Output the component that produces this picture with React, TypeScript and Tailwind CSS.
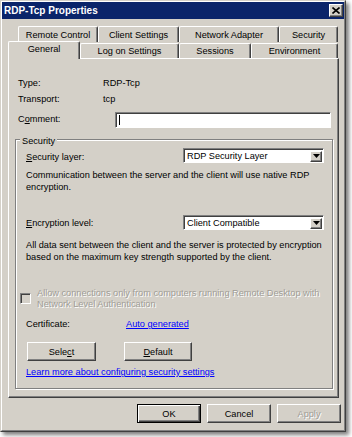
import React from "react";

const FONT = { fontFamily: '"Liberation Sans", Arial, sans-serif' };

function Tab({ label, w, h, selected }: { label: string; w: number; h: number; selected?: boolean }) {
  return (
    <div
      style={{ width: w, height: h }}
      className={
        "flex items-center justify-center border-t border-l border-r border-t-white border-l-white border-r-[#404040] rounded-t-[2px] bg-[#d4d0c8] shadow-[inset_-1px_0_#808080] text-[9.2px] leading-[12px] text-black " +
        (selected ? "relative z-10 translate-y-[1px] pb-[3px]" : "")
      }
    >
      {label}
    </div>
  );
}

function Select({ value }: { value: string }) {
  return (
    <div className="flex h-[15px] w-[141px] items-center border border-t-[#808080] border-l-[#808080] border-b-white border-r-white bg-white shadow-[inset_1px_1px_#404040]">
      <span className="flex-1 pl-[3px] pt-[1px] text-[9.2px] leading-[12px] text-black">{value}</span>
      <div className="mr-[1px] mt-[1px] flex h-[11px] w-[12px] items-center justify-center border border-t-white border-l-white border-b-[#404040] border-r-[#404040] bg-[#d4d0c8] shadow-[inset_-1px_-1px_#808080]">
        <svg width="7" height="4" viewBox="0 0 7 4">
          <path d="M0 0h7L3.5 4z" fill="#000" />
        </svg>
      </div>
    </div>
  );
}

function Button({ label, w, def, disabled }: { label: React.ReactNode; w: number; def?: boolean; disabled?: boolean }) {
  return (
    <div
      style={{ width: w }}
      className={
        "flex h-[19px] items-center justify-center bg-[#d4d0c8] text-[9.2px] leading-[12px] " +
        (def
          ? "border border-black shadow-[inset_1px_1px_#fff,inset_-1px_-1px_#404040,inset_-2px_-2px_#808080]"
          : "border border-t-white border-l-white border-b-[#404040] border-r-[#404040] shadow-[inset_-1px_-1px_#808080]") +
        (disabled ? " text-[#a09d96] [text-shadow:1px_1px_#fff]" : " text-black")
      }
    >
      {label}
    </div>
  );
}

export default function App() {
  return (
    <div className="h-[437px] w-[352px] bg-white" style={FONT}>
      <div className="h-[432px] w-[346px] border border-t-[#d4d0c8] border-l-[#d4d0c8] border-b-[#404040] border-r-[#404040] bg-[#d4d0c8] shadow-[3px_3px_4px_rgba(0,0,0,0.5)]">
        <div className="flex h-full flex-col border border-t-white border-l-white border-b-[#808080] border-r-[#808080]">
          {/* title bar */}
          <div className="flex h-[17px] items-center justify-between bg-[#0a246a] pl-[2px] pr-[1px]">
            <span className="text-[10px] font-bold leading-[12px] text-white">RDP-Tcp Properties</span>
            <div className="flex h-[13px] w-[14px] items-center justify-center border border-t-white border-l-white border-b-[#404040] border-r-[#404040] bg-[#d4d0c8] shadow-[inset_-1px_-1px_#808080]">
              <svg width="8" height="7" viewBox="0 0 8 7">
                <path d="M0.5 0.5L7.5 6.5M7.5 0.5L0.5 6.5" stroke="#000" strokeWidth="1.6" />
              </svg>
            </div>
          </div>

          {/* tabs */}
          <div className="mt-[7px] flex flex-col">
            <div className="flex pl-[16px]">
              <Tab label="Remote Control" w={80} h={16} />
              <Tab label="Client Settings" w={81} h={16} />
              <Tab label="Network Adapter" w={100} h={16} />
              <Tab label="Security" w={59} h={16} />
            </div>
            <div className="flex h-[16px] items-end pl-[6px]">
              <Tab label="General" w={72} h={18} selected />
              <Tab label="Log on Settings" w={99} h={15} />
              <Tab label="Sessions" w={72} h={15} />
              <Tab label="Environment" w={87} h={15} />
            </div>
          </div>

          {/* panel */}
          <div className="ml-[6px] flex h-[340px] w-[331px] flex-col border border-t-white border-l-white border-b-[#404040] border-r-[#404040] shadow-[inset_-1px_-1px_#808080] text-[9.2px] leading-[12px] text-black">
            <div className="mt-[18px] flex h-[12px] pl-[9px]">
              <span className="w-[85px]">Type:</span>
              <span>RDP-Tcp</span>
            </div>
            <div className="mt-[4px] flex h-[12px] pl-[9px]">
              <span className="w-[85px]">Transport:</span>
              <span>tcp</span>
            </div>
            <div className="mt-[7px] flex items-start pl-[9px]">
              <span className="mt-[1px] w-[97px]">
                C<span className="underline">o</span>mment:
              </span>
              <div className="flex h-[16px] w-[216px] items-center border border-t-[#808080] border-l-[#808080] border-b-white border-r-white bg-white shadow-[inset_1px_1px_#404040]">
                <div className="ml-[3px] h-[10px] w-[1px] bg-black" />
              </div>
            </div>

            {/* security group */}
            <div className="relative ml-[6px] mt-[11px] flex h-[250px] w-[318px] flex-col border border-[#808080] pr-[8px] pl-[10px] shadow-[inset_1px_1px_#fff,1px_1px_#fff]">
              <span className="absolute left-[4px] top-[-5px] bg-[#d4d0c8] px-[2px]">Security</span>

              <div className="mt-[8px] flex items-start justify-between">
                <span className="mt-[3px]">
                  <span className="underline">S</span>ecurity layer:
                </span>
                <Select value="RDP Security Layer" />
              </div>
              <p className="mt-[6px]">
                Communication between the server and the client will use native RDP encryption.
              </p>

              <div className="mt-[22px] flex items-start justify-between">
                <span className="mt-[2px]">
                  <span className="underline">E</span>ncryption level:
                </span>
                <Select value="Client Compatible" />
              </div>
              <p className="mt-[10px] leading-[11.5px]">
                All data sent between the client and the server is protected by encryption based on the maximum key
                strength supported by the client.
              </p>

              <div className="mt-[25px] -ml-[6px] flex items-start">
                <div className="mt-[5px] h-[11px] w-[11px] shrink-0 border border-t-[#808080] border-l-[#808080] border-b-white border-r-white bg-[#d4d0c8] shadow-[inset_1px_1px_#404040]" />
                <p className="ml-[6px] leading-[11px] text-[#a09d96] [text-shadow:1px_1px_#fff]">
                  Allow connections only from computers running Remote Desktop with Network Level Authentication
                </p>
              </div>

              <div className="mt-[8px] flex h-[12px]">
                <span className="w-[100px]">Certificate:</span>
                <span className="text-[#0000ff] underline">Auto generated</span>
              </div>

              <div className="mt-[12px] flex gap-[28px] pl-[1px]">
                <Button
                  w={69}
                  label={
                    <span>
                      Sele<span className="underline">c</span>t
                    </span>
                  }
                />
                <Button
                  w={68}
                  label={
                    <span>
                      <span className="underline">D</span>efault
                    </span>
                  }
                />
              </div>

              <span className="mt-[5px] text-[#0000ff] underline">Learn more about configuring security settings</span>
            </div>
          </div>

          {/* dialog buttons */}
          <div className="mt-[6px] flex justify-end gap-[6px] pr-[3px]">
            <Button w={64} label="OK" def />
            <Button w={64} label="Cancel" />
            <Button w={64} label="Apply" disabled />
          </div>
        </div>
      </div>
    </div>
  );
}
